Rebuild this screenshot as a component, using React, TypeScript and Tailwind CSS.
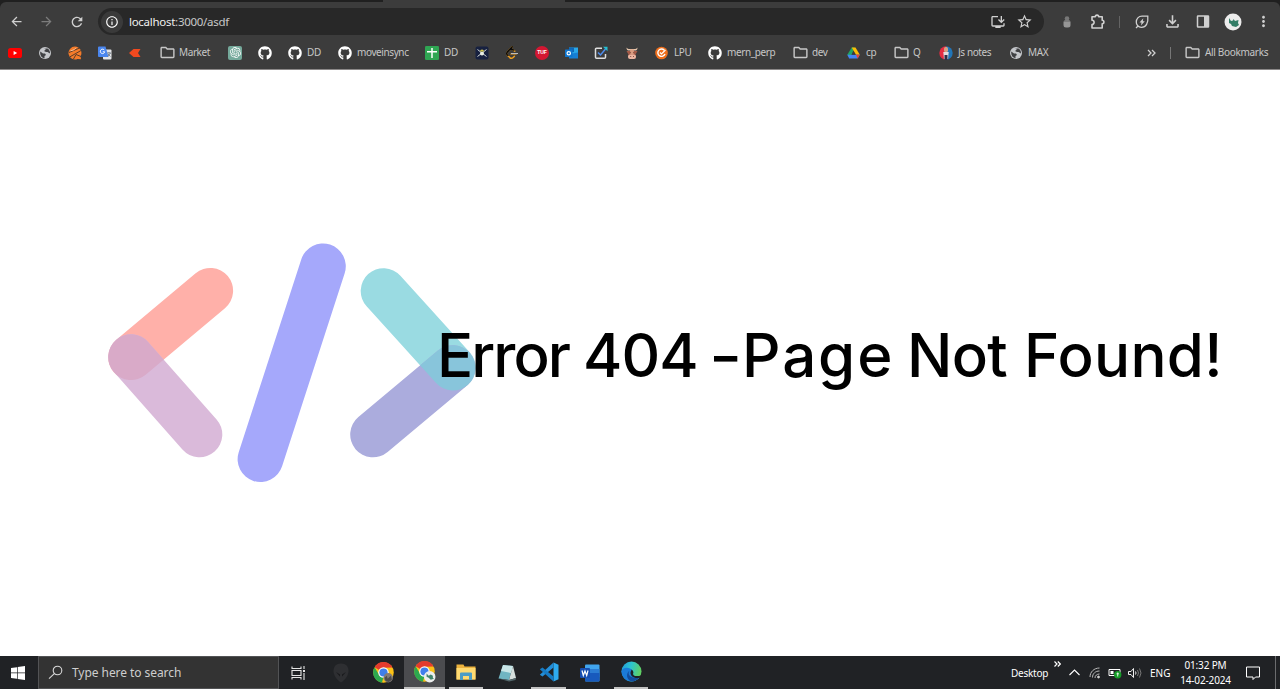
import React from "react";
import {
  MdArrowBack,
  MdArrowForward,
  MdRefresh,
  MdInfoOutline,
  MdInstallDesktop,
  MdStarBorder,
  MdOutlineExtension,
  MdOutlineFileDownload,
  MdMoreVert,
  MdOutlineFolder,
} from "react-icons/md";
import { FaGithub } from "react-icons/fa";
import { SiOpenai, SiLeetcode } from "react-icons/si";

const Folder = () => <MdOutlineFolder className="size-[17px] -ml-px text-[#c7c7c7]" />;
const Github = () => <FaGithub className="size-[14px] text-white" />;

const Globe = () => (
  <svg viewBox="0 0 14 14" className="size-[14px]">
    <circle cx="7" cy="7" r="6" fill="#c4c6ca" />
    <path d="M2.300 5.500 5 7.500h2l1 1.500-1.500 1v2.200C3.500 12 1.700 9 2.300 5.500ZM5.500 2.300l2 0v1.500L6 5l2 1h1.500l2.500 1.500c.2-2.500-1-4-2.500-5Z" fill="#3f4043" />
  </svg>
);

const Youtube = () => (
  <svg viewBox="0 0 14 14" className="size-[14px]">
    <rect x="0" y="2" width="14" height="10" rx="2.6" fill="#f00" />
    <path d="M5.6 5 9.2 7 5.6 9Z" fill="#fff" />
  </svg>
);

const Basket = () => (
  <svg viewBox="0 0 14 14" className="size-[14px]">
    <path d="M7 .5A6.5 6.5 0 1 0 9.5 13l3.5.2-.4-3A6.5 6.5 0 0 0 7 .5Z" fill="#f47b2a" />
    <path d="M1 6.500 12 1.800M2 10.800 13 4.5M5.500 13 8 8.500l5 2" stroke="#493629" strokeWidth=".9" fill="none" />
    <path d="M2.500 4.800 6 3.800 8 1.800" stroke="#ffc196" strokeWidth="1" fill="none" />
  </svg>
);

const Translate = () => (
  <svg viewBox="0 0 14 14" className="size-[14px]">
    <rect x="5" y="3.5" width="8.5" height="10" rx="1" fill="#e3e5e8" />
    <path d="M1 .5h6.5L10.5 11H1a1 1 0 0 1-1-1V1.500a1 1 0 0 1 1-1Z" fill="#4a86ee" />
    <path d="M6.4 4.2a2.200 2.200 0 1 0 .3 1.600H4.800" stroke="#fff" strokeWidth="1" fill="none" />
    <path d="M9 7h4M11 6v1M12.500 7 9.800 10.500M10 8l2.500 2.500" stroke="#66717e" strokeWidth=".8" />
  </svg>
);

const RedMark = () => (
  <svg viewBox="0 0 14 14" className="size-[14px]">
    <path d="M0 7 4.500 3H11.500L9 7l2.500 4H4.500Z" fill="#f1491f" />
  </svg>
);

const Gpt = () => (
  <span className="flex size-[14px] items-center justify-center rounded-[2px] bg-[#75a99b]">
    <SiOpenai className="size-[11px] text-white" />
  </span>
);

const Sheet = () => (
  <svg viewBox="0 0 14 14" className="size-[14px]">
    <rect width="14" height="14" rx="1.300" fill="#2fa653" />
    <path d="M7 2v10M2 5.800h10" stroke="#fff" strokeWidth="1.500" />
  </svg>
);

const DarkBadge = () => (
  <svg viewBox="0 0 14 14" className="size-[14px]">
    <rect x=".5" y=".5" width="13" height="13" rx="2" fill="#172140" />
    <path d="M2.500 3.500l9 7M11.500 3.500l-9 7" stroke="#d5dbd8" strokeWidth="1" />
    <circle cx="7" cy="7.500" r="2" fill="#e8eee4" />
    <path d="M5 5.500a2 2 0 0 1 4 0Z" fill="#d4c84b" />
  </svg>
);

const Leet = () => (
  <span className="relative block size-[14px]">
    <SiLeetcode className="absolute left-0 top-0 size-[13px] text-[#f0a020]" />
    <SiLeetcode className="absolute left-0 top-0 size-[13px] text-[#0c0c0c] [clip-path:polygon(0_0,100%_0,100%_30%,50%_44%,35%_78%,0_80%)]" />
    <span className="absolute left-[6px] top-[7px] h-px w-[7px] bg-[#bcbcbc]" />
  </span>
);

const Tuf = () => (
  <span className="flex size-[14px] items-center justify-center rounded-full bg-[#d31732] font-['Liberation_Sans'] text-[5px] font-bold leading-none text-white">
    TUF
  </span>
);

const Outlook = () => (
  <svg viewBox="0 0 14 14" className="size-[14px]">
    <rect x="4" y="1.500" width="9" height="9" fill="#29a8ea" />
    <path d="M4 1.500h5v4.500H4Z" fill="#1066b5" />
    <path d="M4 12.500V8l9-1.500v6Z" fill="#167fd4" />
    <rect x="0" y="3.500" width="7.500" height="7.500" rx=".6" fill="#0f75ce" />
    <circle cx="3.750" cy="7.250" r="1.700" fill="none" stroke="#fff" strokeWidth="1.200" />
  </svg>
);

const CheckBoxIcon = () => (
  <svg viewBox="0 0 14 14" className="size-[14px]" fill="none">
    <path d="M8 2.200H2.500a1 1 0 0 0-1 1v8a1 1 0 0 0 1 1h8a1 1 0 0 0 1-1V8" stroke="#dedede" strokeWidth="1.500" />
    <path d="M4 6.500 6.500 9 11.500 3" stroke="#4d8df0" strokeWidth="1.500" />
    <path d="M9 .8h4.500v4.500Z" fill="#24bed0" />
  </svg>
);

const Cow = () => (
  <svg viewBox="0 0 14 14" className="size-[14px]">
    <path d="M1.500 1.500c0 2.500 1 3 2.800 3h5.400c1.800 0 2.800-.5 2.800-3-.8 1.500-2 1.500-3 1.500h-5c-1 0-2.200 0-3-1.500Z" fill="#e7c6ac" />
    <path d="M1.500 5h11l-2 3.500v3h-7v-3Z" fill="#a55b48" />
    <path d="M5 3.500h4l-.5 5h-3Z" fill="#d99c80" />
    <rect x="3" y="8.500" width="8" height="4.500" rx="2" fill="#edb6a2" />
    <path d="M4.800 6.500h1M8.200 6.500h1M5.200 10.500h1M8 10.500h1" stroke="#7a4a40" strokeWidth=".9" />
  </svg>
);

const OrangeC = () => (
  <svg viewBox="0 0 14 14" className="size-[14px]" fill="none">
    <circle cx="6.500" cy="7" r="6.300" fill="#ef6f1c" />
    <path d="M9.300 4.200A3.700 3.700 0 1 0 10 8" stroke="#fff" strokeWidth="1.400" />
    <path d="M5 6.500 6.500 8 10.500 4" stroke="#fff" strokeWidth="1.200" />
  </svg>
);

const Drive = () => (
  <svg viewBox="0 0 14 14" className="size-[14px]">
    <path d="M4.700 1.500h3L3 12.500.3 8.800Z" fill="#1fa463" />
    <path d="M4.700 1.500h3.800l4.300 7.300H9Z" fill="#fbbd05" />
    <path d="M2.600 8.800h10.200L10.600 12.500H2.200L.3 8.800Z" fill="#4385f5" />
    <path d="M9 8.800h3.800l-2.200 3.700Z" fill="#ea4535" />
    <path d="M6.500 5.300 8.400 8.800H4.500Z" fill="#3c3c3c" />
  </svg>
);

const JsNotes = () => (
  <svg viewBox="0 0 14 14" className="size-[14px]">
    <path d="M7 .3a6.700 6.700 0 0 0 0 13.400Z" fill="#e52b42" />
    <path d="M7 .3a6.700 6.700 0 0 1 0 13.400Z" fill="#2175b8" />
    <rect x="5" y="1" width="4" height="5" rx="1.500" fill="#d4a183" />
    <path d="M4.300 6h5.400l-.7 7H5Z" fill="#e6dcdf" />
    <path d="M5.500 9h3v5h-3Z" fill="#303048" />
  </svg>
);

interface Bookmark {
  icon: React.ReactNode;
  label?: string;
  box: string;
}

const bookmarks: Bookmark[] = [
  { icon: <Youtube />, box: "w-[30px]" },
  { icon: <Globe />, box: "w-[30px]" },
  { icon: <Basket />, box: "w-[30px]" },
  { icon: <Translate />, box: "w-[31px]" },
  { icon: <RedMark />, box: "w-[31px]" },
  { icon: <Folder />, label: "Market", box: "w-[68px]" },
  { icon: <Gpt />, box: "w-[30px]" },
  { icon: <Github />, box: "w-[30px]" },
  { icon: <Github />, label: "DD", box: "w-[50px]" },
  { icon: <Github />, label: "moveinsync", box: "w-[87px]" },
  { icon: <Sheet />, label: "DD", box: "w-[50px]" },
  { icon: <DarkBadge />, box: "w-[30px]" },
  { icon: <Leet />, box: "w-[30px]" },
  { icon: <Tuf />, box: "w-[30px]" },
  { icon: <Outlook />, box: "w-[29px]" },
  { icon: <CheckBoxIcon />, box: "w-[31px]" },
  { icon: <Cow />, box: "w-[30px]" },
  { icon: <OrangeC />, label: "LPU", box: "w-[53px]" },
  { icon: <Github />, label: "mern_perp", box: "w-[85px]" },
  { icon: <Folder />, label: "dev", box: "w-[54px]" },
  { icon: <Drive />, label: "cp", box: "w-[47px]" },
  { icon: <Folder />, label: "Q", box: "w-[45px]" },
  { icon: <JsNotes />, label: "Js notes", box: "w-[70px]" },
  { icon: <Globe />, label: "MAX", box: "w-[138px]" },
];

function BrowserBar() {
  return (
    <header className="h-[70px] shrink-0 bg-[#202020] font-['Noto_Sans',sans-serif]">
      <div className="flex h-[2px] pl-[383px]">
        <div className="w-[182px] bg-[#3c3c3c]" />
      </div>
      <div className="h-[68px] rounded-t-[6px] border-b border-[#8b8888] bg-[#3c3c3c]">
        <div className="flex h-[39px] items-center text-[#d0d0d0]">
          <MdArrowBack className="ml-[9px] size-[15px]" />
          <MdArrowForward className="ml-[15px] size-[15px] text-[#7c7c7c]" />
          <MdRefresh className="ml-[15px] size-[16px]" />
          <div className="ml-[13px] flex h-[27px] w-[946px] items-center rounded-full bg-[#282828]">
            <span className="ml-[3px] flex size-[22px] items-center justify-center rounded-full bg-[#3a3a3a]">
              <MdInfoOutline className="size-[14px] text-white" />
            </span>
            <span className="ml-[6px] flex-1 text-[11.5px] leading-none tracking-[-0.28px] text-[#c9c9c9]">
              <span className="text-[#f0f0f0]">localhost</span>:3000/asdf
            </span>
            <MdInstallDesktop className="size-[16px]" />
            <MdStarBorder className="ml-[10px] mr-[11px] size-[17px]" />
          </div>
          <svg viewBox="0 0 8 12" className="ml-[19px] h-[12px] w-[8px]">
            <circle cx="4" cy="2.500" r="2.300" fill="#777" />
            <rect x=".5" y="4" width="7" height="7.500" rx="2.500" fill="#969696" />
            <path d="M1 5h6" stroke="#606060" />
          </svg>
          <svg viewBox="0 0 16 16" className="ml-[19px] size-[16px]" fill="none" stroke="#d0d0d0" strokeWidth="1.600">
            <path d="M2 2.800h3.300a1.700 1.700 0 0 1 3.400 0H12.200v3.500a1.700 1.700 0 0 1 0 3.400V14H2v-3.500a2.100 2.100 0 0 0 0-4.200Z" strokeLinejoin="round" />
          </svg>
          <span className="ml-[13px] h-[12px] w-px bg-[#646464]" />
          <svg viewBox="0 0 14 14" className="ml-[15px] size-[14px]" fill="none" stroke="#d0d0d0" strokeWidth="1.300">
            <path d="M1 13 3 11M12.800 1.200H7C3.500 1.200 1.300 3.800 1.300 7A5 5 0 0 0 6.500 12.300c4.500 0 7-4 6.300-11.100Z" />
            <path d="M8.300 3.300 4.500 7.500h2L6 10.500l3.800-4.300h-2Z" fill="#d0d0d0" stroke="none" />
          </svg>
          <MdOutlineFileDownload className="ml-[14px] size-[19px]" />
          <svg viewBox="0 0 14 13" className="ml-[14px] h-[13px] w-[14px]">
            <rect x="1.500" y="1" width="11" height="11" rx=".5" fill="none" stroke="#d0d0d0" strokeWidth="1.500" />
            <path d="M8 1h4.500v11H8Z" fill="#d0d0d0" />
          </svg>
          <svg viewBox="0 0 18 18" className="ml-[14px] size-[18px]">
            <circle cx="9" cy="9" r="8.500" fill="#ececec" />
            <path d="m5 5 2 3 2-.5.5-1.500 1.500 2 3.500-1-.5 3 1 2-3 2-4-1-1-2-2-1Z" fill="#337d66" />
          </svg>
          <MdMoreVert className="ml-[13px] size-[17px]" />
        </div>
        <nav className="flex h-[23px] items-center pl-[8px] text-[10px] leading-none text-[#c7c7c7]">
          {bookmarks.map((b, i) => (
            <div key={i} className={"flex shrink-0 items-center " + b.box}>
              <span className="flex w-[19px] shrink-0 items-center">{b.icon}</span>
              {b.label && <span className="-mt-px whitespace-nowrap tracking-[-0.4px]">{b.label}</span>}
            </div>
          ))}
          <svg viewBox="0 0 9 8" className="h-[8px] w-[9px]" fill="none" stroke="#d0d0d0" strokeWidth="1.300">
            <path d="m1 1 3 3-3 3M5 1l3 3-3 3" />
          </svg>
          <span className="ml-[14px] h-[12px] w-px bg-[#777]" />
          <span className="ml-[14px] flex w-[20px]">
            <Folder />
          </span>
          <span className="-mt-px whitespace-nowrap tracking-[-0.32px]">All Bookmarks</span>
        </nav>
      </div>
    </header>
  );
}

interface BarProps {
  from: [number, number];
  to: [number, number];
  fill?: string;
  clipPath?: string;
}

function Bar({ from, to, fill, clipPath }: BarProps) {
  const r = 22.8;
  const dx = to[0] - from[0];
  const dy = to[1] - from[1];
  const angle = (Math.atan2(dy, dx) * 180) / Math.PI;
  const shape = (
    <rect
      x={from[0] - r}
      y={from[1] - r}
      width={Math.hypot(dx, dy) + 2 * r}
      height={2 * r}
      rx={r}
      fill={fill}
      transform={`rotate(${angle} ${from[0]} ${from[1]})`}
    />
  );
  return clipPath ? <g clipPath={clipPath}>{shape}</g> : shape;
}

function CodeLogo() {
  return (
    <svg viewBox="108 243 368 240" className="h-[240px] w-[368px] shrink-0">
      <defs>
        <clipPath id="pink">
          <rect x="108.200" y="334.200" width="149.036" height="45.600" rx="22.800" transform="rotate(48.530 131 357)" />
        </clipPath>
        <clipPath id="teal">
          <rect x="360.700" y="268.200" width="149.100" height="45.600" rx="22.800" transform="rotate(47.820 383.500 291)" />
        </clipPath>
      </defs>
      <Bar from={[210.3, 290.7]} to={[131, 357.3]} fill="#ffb0a9" />
      <Bar from={[131, 357]} to={[199.5, 434.5]} fill="#dabada" />
      <Bar from={[210.3, 290.7]} to={[131, 357.3]} fill="#d9aac8" clipPath="url(#pink)" />
      <Bar from={[323, 266.3]} to={[260.4, 459.2]} fill="#a5a8fb" />
      <Bar from={[383.5, 291]} to={[453, 367.7]} fill="#9adbe2" />
      <Bar from={[373, 434.5]} to={[452.5, 368]} fill="#abacdd" />
      <Bar from={[373, 434.5]} to={[452.5, 368]} fill="#88c5db" clipPath="url(#teal)" />
    </svg>
  );
}

function Chrome() {
  return (
    <>
      <circle cx="10" cy="10" r="9.800" fill="#fbc116" />
      <path d="M10 10 1.500 5A9.800 9.800 0 0 1 18.600 5.200L10 5.500Z" fill="#e33b2e" />
      <path d="M1.500 5 6 12.500 10 14.500 8.500 19.700A9.800 9.800 0 0 1 1.500 5Z" fill="#2da94f" />
      <circle cx="10" cy="10" r="5" fill="#fff" />
      <circle cx="10" cy="10" r="3.900" fill="#3f7fea" />
    </>
  );
}

function Taskbar() {
  return (
    <footer className="flex h-[33px] shrink-0 items-stretch bg-[#202225] font-['Noto_Sans',sans-serif] text-white">
      <div className="flex w-[38px] items-center pl-[11px]">
        <svg viewBox="0 0 14 14" className="size-[14px]" fill="#fff">
          <path d="M0 2 6 1.200V6.600H0ZM6.700 1.100 14 0V6.600H6.700ZM0 7.300H6V12.700L0 12ZM6.700 7.300H14V14L6.700 12.900Z" />
        </svg>
      </div>
      <div className="flex w-[241px] items-center border border-[#525355] bg-[#333333] pl-[9px]">
        <svg viewBox="0 0 15 15" className="size-[15px]" fill="none" stroke="#d8d8d8" strokeWidth="1.100">
          <circle cx="9.500" cy="5.500" r="4.300" />
          <path d="m6.300 8.700-5.300 5" />
        </svg>
        <span className="ml-[9px] text-[12px] leading-none tracking-[-0.06px] text-[#cecece]">Type here to search</span>
      </div>
      <div className="flex w-[49px] items-center pl-[12px]">
        <svg viewBox="0 0 15 14" className="h-[14px] w-[15px]" fill="none" stroke="#e5e5e5" strokeWidth="1.100">
          <path d="M1 .500v2h9v-2M1 13.500v-2h9v2M1 4.500h9v5H1ZM13 0v3M13 7v7" />
          <path d="M12 4h2v2h-2Z" fill="#e5e5e5" stroke="none" />
        </svg>
      </div>
      <div className="flex w-[34px] items-center pl-[5px]">
        <svg viewBox="0 0 16 20" className="h-[20px] w-[16px]">
          <path d="M8 .5C3 .5.500 3.500.500 8S4 17 8 19.500C12 17 15.500 12.500 15.500 8S13 .500 8 .500Z" fill="#2e2f32" />
          <path d="m3 9 4 2.500v2ZM13 9l-4 2.500v2Z" fill="#18191b" />
        </svg>
      </div>
      <div className="flex w-[42px] items-center justify-center">
        <svg viewBox="0 0 20 20" className="size-[21px]">
          <Chrome />
          <circle cx="14.500" cy="15" r="4.500" fill="#827b76" />
          <path d="m11 15 2-2 1 3 3-3 1 4-3 2-3-1Z" fill="#4e4c4c" />
        </svg>
      </div>
      <div className="flex w-[41px] items-center justify-center border-b-2 border-[#c2c2c2] bg-[#4b4c4f]">
        <svg viewBox="0 0 21 21" className="size-[22px]">
          <Chrome />
          <circle cx="15" cy="15" r="5.500" fill="#eceeed" />
          <path d="m12 12 2 2 2-1 2 1v2l1 1-3 1-2-2-2-1Z" fill="#42856c" />
        </svg>
      </div>
      <div className="ml-[4px] flex w-[34px] items-center justify-center border-b-2 border-[#c2c2c2]">
        <svg viewBox="0 0 20 18" className="h-[18px] w-[20px]">
          <path d="M.500 1.500h7l1 2h11v13H.500Z" fill="#edb33d" />
          <path d="M.500 5h19v11.500H.500Z" fill="#ffda71" />
          <path d="M4 17V10.500a1 1 0 0 1 1-1h10a1 1 0 0 1 1 1V17h-3v-4H7v4Z" fill="#4c9cc5" />
        </svg>
      </div>
      <div className="flex w-[48px] items-center justify-center">
        <svg viewBox="0 0 18 18" className="size-[18px]">
          <path d="M5 1 15 2 11 16 .500 14.500Z" fill="#70b5c2" />
          <path d="M5 1 15 2 13 9 3 7Z" fill="#c9e6e7" />
          <path d="m15 2 3 12-7 2Z" fill="#d6dfdd" />
          <path d="m.500 14.500 10.500 1.500 7-2-.5 2-6.500 1.500Z" fill="#53676b" />
        </svg>
      </div>
      <div className="flex w-[35px] items-center justify-center border-b-2 border-[#c2c2c2]">
        <svg viewBox="0 0 20 20" className="size-[20px]">
          <path d="m14.500.500 5 2.200v14.600l-5 2.200Z" fill="#2eabef" />
          <path d="m14.500 5.500-11 9L.800 12.700 14.500.500Z" fill="#238ed8" />
          <path d="M14.500 14.500 3.500 5.500.800 7.300l13.700 12.200Z" fill="#167bc4" />
        </svg>
      </div>
      <div className="flex w-[48px] items-center justify-center">
        <svg viewBox="0 0 20 18" className="h-[18px] w-[20px]">
          <rect x="5" y=".500" width="14.500" height="17" rx="1" fill="#41a5ee" />
          <path d="M5 5h14.500v8H5Z" fill="#2b7cd3" />
          <path d="M5 9h14.500v7.500a1 1 0 0 1-1 1H6a1 1 0 0 1-1-1Z" fill="#185abd" />
          <rect y="4" width="10" height="10" rx="1" fill="#164db0" />
          <path d="m2 6.500 1.300 5L5 7l1.700 4.500L8 6.500" fill="none" stroke="#fff" strokeWidth="1.200" />
        </svg>
      </div>
      <div className="flex w-[34px] items-center justify-center border-b-2 border-[#c2c2c2]">
        <svg viewBox="0 0 21 21" className="size-[21px]">
          <defs>
            <linearGradient id="edgeTop" x1="0" y1="0" x2="1" y2=".3">
              <stop offset="0" stopColor="#2196dc" />
              <stop offset=".5" stopColor="#2dc5ce" />
              <stop offset="1" stopColor="#5fd065" />
            </linearGradient>
          </defs>
          <circle cx="10.500" cy="10.500" r="10" fill="url(#edgeTop)" />
          <path d="M.500 10C2 6.500 6 6 9 7.500c2 1 3.500 2.500 3.200 4.500-1 2.500 2 4 6.800 3.700A10 10 0 0 1 .500 10Z" fill="#1b7bd8" />
          <path d="M8.500 9.800C6 13 9 18.500 18.500 16.300a10 10 0 0 1-8 4.200C5 18.500 5 12 8.500 9.800Z" fill="#134c9c" />
          <path d="M10.500 8.500c2 1.500 2 3 1.700 3.800-.6 1.500.8 3 4.300 2.700 2 0 3.500-.5 4-1.500l1 4-2.700-.8C13 18 9.500 15 9.500 12c0-1.500.8-2.200 1-3.500Z" fill="#202225" />
        </svg>
      </div>
      <div className="ml-auto flex items-center text-[10px] leading-none">
        <span className="w-[43px] whitespace-nowrap tracking-[-0.25px]">Desktop</span>
        <svg viewBox="0 0 7 6" className="mb-[18px] h-[6px] w-[7px]" fill="none" stroke="#fff" strokeWidth="1.200">
          <path d="m.5.500 2.500 2.500-2.500 2.500M3.800.500l2.500 2.500-2.500 2.500" />
        </svg>
        <svg viewBox="0 0 11 7" className="ml-[8px] h-[7px] w-[11px]" fill="none" stroke="#fff" strokeWidth="1.100">
          <path d="m.5 6 5-5 5 5" />
        </svg>
        <svg viewBox="0 0 12 12" className="ml-[9px] size-[12px]" fill="none" stroke="#bbb" strokeWidth="1">
          <path d="M1 10C1 5 5 1 10.500 1M3.500 10.500c0-4 3-6.500 7-6.500M6 11c0-2.500 2-4 4.500-4" />
          <circle cx="9.500" cy="10" r="1" fill="#fff" />
        </svg>
        <svg viewBox="0 0 14 12" className="ml-[7px] h-[12px] w-[14px]">
          <path d="M1 2.500h11v6H1Z" fill="none" stroke="#fff" />
          <path d="M2.500 4h3v3h-3Z" fill="#fff" />
          <circle cx="9.700" cy="7.800" r="3.700" fill="#169c28" />
          <path d="M9.700 5.500v4M8.500 6.800h2.500" stroke="#fff" strokeWidth=".8" />
        </svg>
        <svg viewBox="0 0 14 12" className="ml-[6px] h-[12px] w-[14px]" fill="none" stroke="#eee" strokeWidth="1">
          <path d="M.500 4.500H3L5.500 1.500v9L3 7.500H.500ZM7.500 4.500q1 1.500 0 3" />
          <path d="M9.500 3q2 3 0 6M11.500 1.500q3 4.500 0 9" stroke="#777" />
        </svg>
        <span className="ml-[8px] w-[29px]">ENG</span>
        <div className="flex w-[53px] flex-col items-center gap-[5px] whitespace-nowrap tracking-[-0.15px]">
          <span>01:32 PM</span>
          <span>14-02-2024</span>
        </div>
        <svg viewBox="0 0 14 14" className="ml-[14px] mr-[15px] size-[14px]" fill="none" stroke="#fff" strokeWidth="1">
          <path d="M.500 1h13v10H9.500l-2.500 2.500V11H.500Z" />
        </svg>
        <span className="mr-[4px] h-[33px] w-px bg-[#6b6c6e]" />
      </div>
    </footer>
  );
}

const headline = [
  { text: "Error", style: "w-[146px] tracking-[-1.9px]" },
  { text: "404", style: "w-[126px] tracking-[-0.9px]" },
  { text: "-", style: "w-[33px] origin-left scale-x-[1.2]" },
  { text: "Page", style: "w-[165px] tracking-[1.9px]" },
  { text: "Not", style: "w-[117px] tracking-[-0.7px]" },
  { text: "Found!", style: "w-[200px] tracking-[0.3px]" },
];

export default function App() {
  return (
    <div className="flex h-[689px] w-[1280px] flex-col overflow-hidden bg-white">
      <BrowserBar />
      <main className="flex flex-1 items-center pl-[108px]">
        <CodeLogo />
        <h1 className="z-10 -ml-[39px] mt-[-17px] flex whitespace-nowrap font-['Inter',sans-serif] text-[60px] font-medium leading-none text-black">
          {headline.map((w) => (
            <span key={w.text} className={"shrink-0 " + w.style}>
              {w.text}
            </span>
          ))}
        </h1>
      </main>
      <Taskbar />
    </div>
  );
}
